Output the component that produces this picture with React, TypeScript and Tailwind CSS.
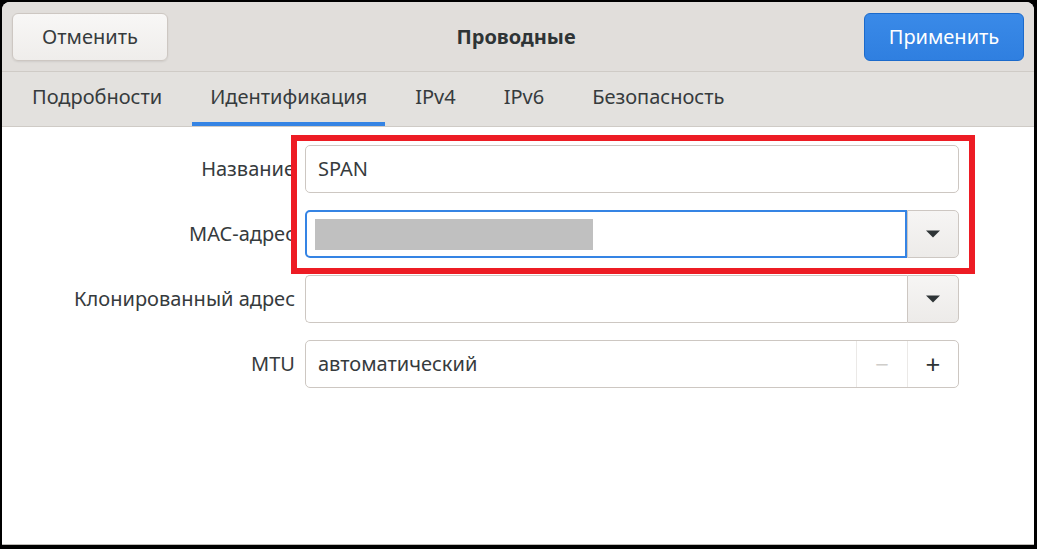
import React from 'react'

const font = { fontFamily: '"Noto Sans", "Open Sans", sans-serif' }

function Caret() {
  return (
    <svg width="16" height="8" viewBox="0 0 16 8" className="text-[#2e3436]">
      <path d="M1 0.5 L15 0.5 L8 7.5 Z" fill="currentColor" />
    </svg>
  )
}

function Combo({ focused, children }: { focused?: boolean; children?: React.ReactNode }) {
  return (
    <div className="flex h-[48px]">
      <div
        className={`flex flex-1 items-center rounded-l-[5px] bg-white px-[8px] ${
          focused ? 'border-2 border-[#3584e4]' : 'border border-r-0 border-[#cdc7c2]'
        }`}
      >
        {children}
      </div>
      <div className="flex w-[52px] items-center justify-center rounded-r-[5px] border border-l border-[#cdc7c2] bg-gradient-to-b from-[#f6f5f4] to-[#edebe9]">
        <Caret />
      </div>
    </div>
  )
}

export default function App() {
  const tabs = ['Подробности', 'Идентификация', 'IPv4', 'IPv6', 'Безопасность']
  const active = 1

  return (
    <div className="h-[549px] w-[1037px] overflow-hidden bg-black pl-[2px] pt-[2px] pr-[3px] pb-[4px]" style={font}>
      <div className="relative flex h-full flex-col overflow-hidden rounded-t-[8px] border-b border-[#bdbab6] bg-white">
        {/* header bar */}
        <header className="flex h-[70px] items-center justify-between border-b border-[#cfcbc6] bg-[#e1dedb] px-[10px]">
          <button className="h-[48px] w-[156px] rounded-[6px] border border-[#cdc7c2] bg-gradient-to-b from-[#f8f7f6] to-[#efedeb] text-[20px] text-[#363b3d] shadow-[0_1px_2px_rgba(0,0,0,0.08)]">
            Отменить
          </button>
          <h1 className="text-[20px] font-bold text-[#2e3436]">Проводные</h1>
          <button className="h-[48px] w-[160px] rounded-[6px] border border-[#1b6acb] bg-gradient-to-b from-[#3a8ae8] to-[#2f7fe0] text-[20px] text-white">
            Применить
          </button>
        </header>

        {/* tabs */}
        <nav className="flex h-[55px] items-stretch gap-3 border-b border-[#cfcbc6] bg-[#e3e1de] pl-[12px]">
          {tabs.map((t, i) => (
            <div
              key={t}
              className={`flex items-center border-b-4 px-[18px] text-[20px] text-[#363b3d] ${
                i === active ? 'border-[#3584e4]' : 'border-transparent'
              }`}
            >
              {t}
            </div>
          ))}
        </nav>

        {/* form */}
        <div className="grid grid-cols-[293px_654px] gap-x-[10px] gap-y-[17px] pt-[18px] text-[20px] text-[#363b3d]">
          <div className="flex items-center justify-end">Название</div>
          <div className="flex h-[48px] items-center rounded-[5px] border border-[#cdc7c2] bg-white px-[12px]">SPAN</div>

          <div className="flex items-center justify-end">MAC-адрес</div>
          <Combo focused>
            <div className="h-[31px] w-[278px] bg-[#c0c0c0]" />
          </Combo>

          <div className="flex items-center justify-end">Клонированный адрес</div>
          <Combo />

          <div className="flex items-center justify-end">MTU</div>
          <div className="flex h-[48px] rounded-[5px] border border-[#cdc7c2] bg-white">
            <div className="flex flex-1 items-center px-[12px]">автоматический</div>
            <div className="flex w-[51px] items-center justify-center border-l border-[#ebe9e7] text-[24px] text-[#cfcdca]">−</div>
            <div className="flex w-[51px] items-center justify-center border-l border-[#ebe9e7] text-[26px] text-[#2e3436]">+</div>
          </div>
        </div>

        {/* red highlight */}
        <div className="pointer-events-none absolute left-[289px] top-[133px] h-[139px] w-[684px] border-[6px] border-[#ed1c24]" />
      </div>
    </div>
  )
}
